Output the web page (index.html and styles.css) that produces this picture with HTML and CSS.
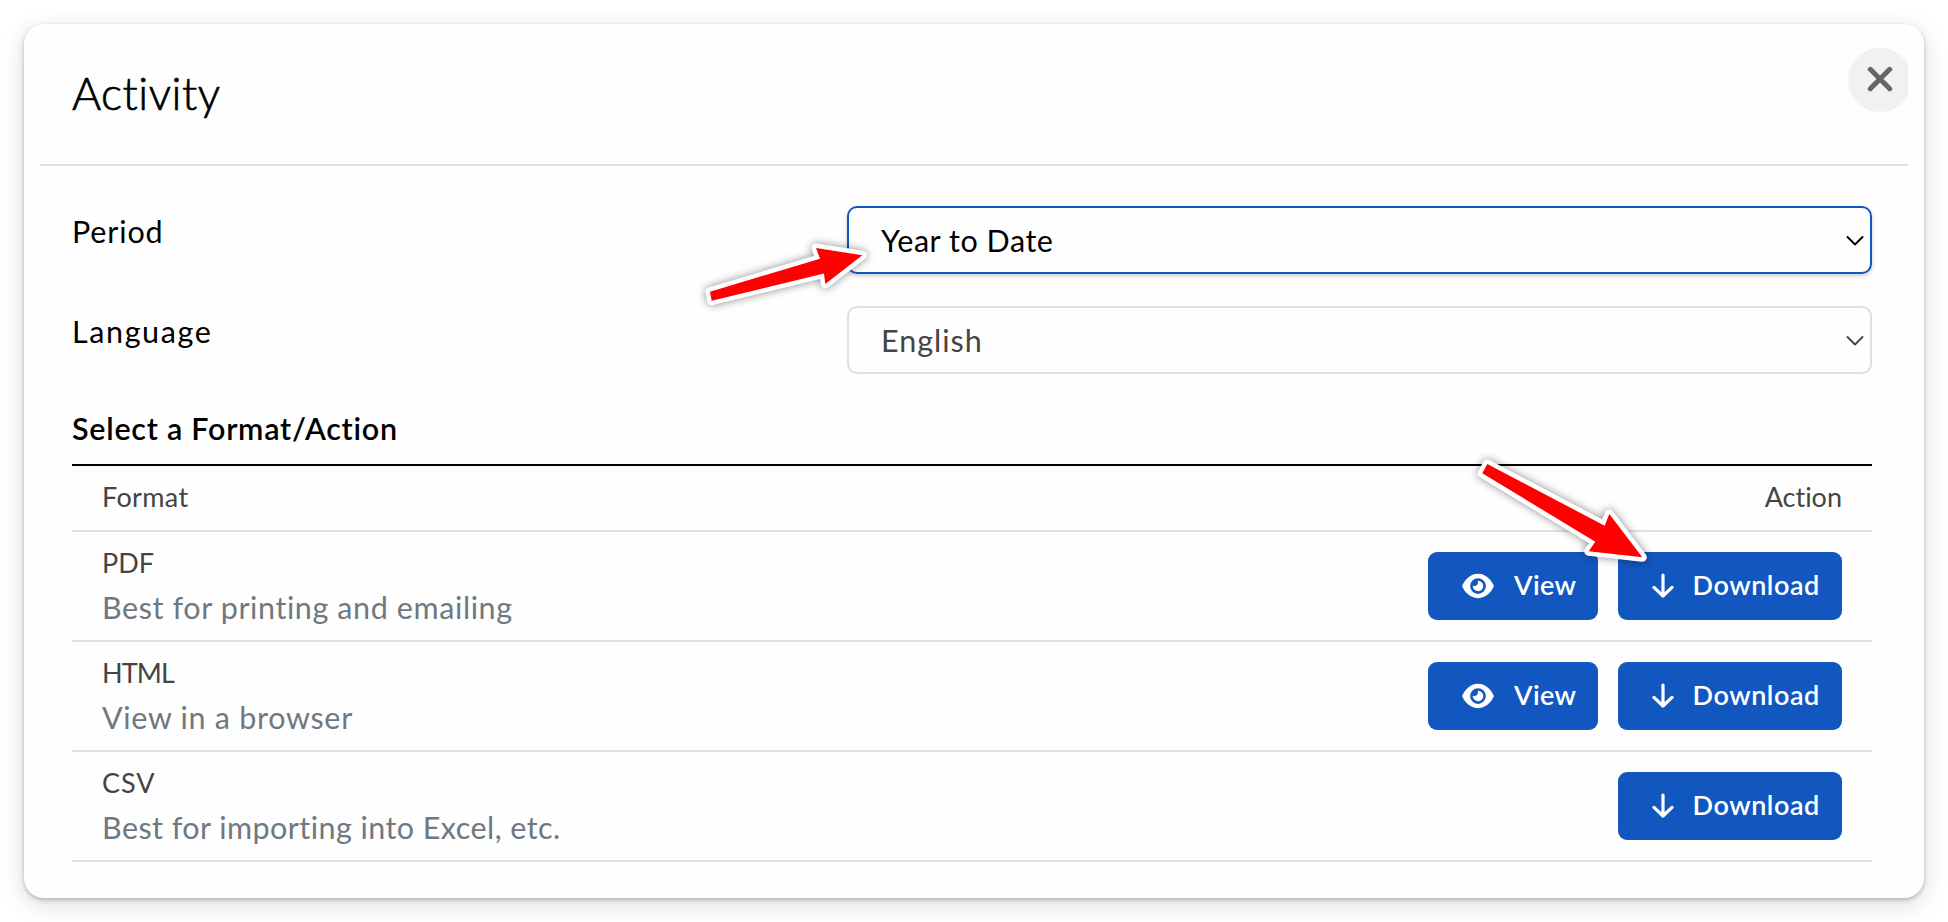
FILE: index.html
```html
<!DOCTYPE html>
<html lang="en">
<head>
<meta charset="utf-8">
<title>Activity</title>
<link rel="stylesheet" href="styles.css">
</head>
<body>
<svg class="sprite" aria-hidden="true">
  <symbol id="eye" viewBox="0 0 576 512"><path fill="currentColor" d="M288 32c-80.800 0-145.500 36.800-192.600 80.600C48.600 156 17.300 208 2.500 243.700c-3.300 7.900-3.300 16.700 0 24.600C17.300 304 48.600 356 95.400 399.400 142.500 443.200 207.200 480 288 480s145.500-36.800 192.600-80.600c46.800-43.500 78.100-95.400 93-131.100 3.300-7.900 3.300-16.700 0-24.600-14.900-35.700-46.200-87.700-93-131.100C433.500 68.800 368.800 32 288 32zM144 256a144 144 0 1 1 288 0 144 144 0 1 1-288 0zm144-64c0 35.300-28.700 64-64 64-7.100 0-13.900-1.200-20.300-3.300-5.500-1.800-11.900 1.600-11.700 7.400.3 6.900 1.300 13.800 3.200 20.700 13.700 51.200 66.400 81.600 117.600 67.900s81.600-66.400 67.900-117.600c-11.100-41.500-47.800-69.400-88.600-71.100-5.800-.2-9.200 6.100-7.400 11.700 2.100 6.400 3.300 13.200 3.300 20.300z"/></symbol>
  <symbol id="down" viewBox="0 0 22 26"><path fill="none" stroke="currentColor" stroke-width="3.200" stroke-linecap="round" stroke-linejoin="round" d="M11 2V23M2 14.400L11 23L20 14.400"/></symbol>
  <symbol id="chevron" viewBox="0 0 18 12"><path fill="none" stroke="currentColor" stroke-width="1.900" stroke-linecap="round" stroke-linejoin="round" d="M1.500 2L9 9.500L16.500 2"/></symbol>
</svg>

<main class="card">
  <header class="head">
    <h1 class="title">Activity</h1>
    <div class="close-clip">
      <button class="close" aria-label="Close"><svg viewBox="0 0 26 26"><path d="M3.300 3.300L22.700 22.700M22.700 3.300L3.300 22.700"/></svg></button>
    </div>
  </header>

  <div class="body">
    <div class="field">
      <div class="label label-period">Period</div>
      <div class="select active"><span class="value-period">Year to Date</span><svg class="chev"><use href="#chevron"/></svg></div>
    </div>
    <div class="field">
      <div class="label label-language">Language</div>
      <div class="select"><span class="value-language">English</span><svg class="chev"><use href="#chevron"/></svg></div>
    </div>

    <h2 class="section">Select a Format/Action</h2>
    <div class="thead"><span class="col-format">Format</span><span>Action</span></div>

    <div class="row">
      <div class="info"><div class="name">PDF</div><div class="desc">Best for printing and emailing</div></div>
      <button class="btn view"><svg class="eye"><use href="#eye"/></svg>View</button>
      <button class="btn download"><svg class="down"><use href="#down"/></svg>Download</button>
    </div>
    <div class="row">
      <div class="info"><div class="name name-html">HTML</div><div class="desc desc-html">View in a browser</div></div>
      <button class="btn view"><svg class="eye"><use href="#eye"/></svg>View</button>
      <button class="btn download"><svg class="down"><use href="#down"/></svg>Download</button>
    </div>
    <div class="row">
      <div class="info"><div class="name name-csv">CSV</div><div class="desc desc-csv">Best for importing into Excel, etc.</div></div>
      <button class="btn download"><svg class="down"><use href="#down"/></svg>Download</button>
    </div>
  </div>
</main>

<svg class="arrows" viewBox="0 0 1948 922" aria-hidden="true">
  <polygon points="710,291.700 711.700,300.700 824,273.500 825.300,284 862.300,255.300 816,248 820,258.700"/>
  <polygon points="1487.300,464 1482.300,473.300 1595.300,541.700 1588.700,551.300 1642.300,557.300 1609.300,514 1604.700,525.700"/>
</svg>
</body>
</html>
```
FILE: styles.css
```css
* { box-sizing: border-box; }
body {
  margin: 0;
  width: 1948px;
  height: 922px;
  padding: 24px;
  overflow: hidden;
  background: #fff;
  color: #000;
  font-family: Lato, "Open Sans", sans-serif;
  font-variant-ligatures: none;
}
.sprite { position: absolute; width: 0; height: 0; }

.card {
  height: 874px;
  padding: 0 16px;
  border-radius: 20px;
  background: #fefefe;
  box-shadow: 0 2px 4px rgba(0,0,0,.22), 0 6px 24px rgba(0,0,0,.15);
}
.head {
  height: 142px;
  display: flex;
  justify-content: space-between;
  padding: 24px 0 0 32px;
  border-bottom: 2px solid #e0e0e0;
}
.title {
  margin: 17px 0 0;
  font-size: 44.500px;
  line-height: 56px;
  font-weight: 300;
  letter-spacing: .5px;
  -webkit-text-stroke: .7px #000;
}
.close-clip { width: 60px; height: 64px; overflow: hidden; }
.close {
  width: 64px;
  height: 64px;
  border: 0;
  padding: 0 0 2px;
  border-radius: 50%;
  background: #f1f1f1;
  display: flex;
  align-items: center;
  justify-content: center;
}
.close svg { width: 26px; height: 26px; fill: none; stroke: #666; stroke-width: 5; stroke-linecap: round; }

.body { padding: 40px 36px 0 32px; }
.field { display: flex; justify-content: space-between; height: 68px; margin-bottom: 32px; }
.label { font-size: 30.500px; line-height: 50px; }
.label-period { letter-spacing: .85px; }
.label-language { letter-spacing: 1.600px; }
.select {
  width: 1025px;
  height: 68px;
  display: flex;
  align-items: center;
  justify-content: space-between;
  padding: 0 6px 0 32px;
  border: 2px solid #e0e0e0;
  border-radius: 10px;
  font-size: 30.500px;
  color: #444;
}
.select.active { border-color: #1257c0; color: #000; box-shadow: 0 2px 4px rgba(0,0,0,.2); }
.value-period { letter-spacing: .55px; }
.value-language { letter-spacing: 1px; }
.chev { width: 18px; height: 12px; margin-top: 1px; }

.section {
  margin: 0;
  height: 60px;
  padding-top: 3px;
  border-bottom: 2px solid #000;
  font-size: 30.500px;
  line-height: 38px;
  font-weight: 600;
  letter-spacing: .74px;
}
.thead {
  height: 66px;
  display: flex;
  justify-content: space-between;
  padding: 0 30px;
  border-bottom: 2px solid #e0e0e0;
  font-size: 27px;
  line-height: 62px;
  color: #444;
}
.col-format { letter-spacing: .35px; }
.row {
  height: 110px;
  display: flex;
  align-items: flex-start;
  gap: 20px;
  padding: 20px 30px 0;
  border-bottom: 2px solid #e0e0e0;
}
.info { flex: 1; margin-top: -9px; }
.name { font-size: 27px; line-height: 40px; color: #444; }
.name-html { letter-spacing: -.9px; }
.name-csv { letter-spacing: .9px; }
.desc { font-size: 30.500px; line-height: 48px; color: #6f7880; letter-spacing: .6px; }
.desc-html { letter-spacing: .7px; }
.desc-csv { letter-spacing: .44px; }
.btn {
  height: 68px;
  display: flex;
  align-items: center;
  padding: 0 0 3px 34px;
  border: 0;
  border-radius: 9px;
  background: #1257c0;
  color: #fff;
  font: 600 27px Lato, "Open Sans", sans-serif;
}
.view { width: 170px; letter-spacing: .4px; }
.download { width: 224px; letter-spacing: .55px; }
.eye { width: 32px; height: 28px; margin: 2px 20px 0 0; }
.down { width: 22px; height: 26px; margin: 2px 19px 0 -.5px; }

.arrows {
  position: absolute;
  left: 0;
  top: 0;
  width: 1948px;
  height: 922px;
  pointer-events: none;
  filter: drop-shadow(0 0 4px rgba(0,0,0,.45));
}
.arrows polygon {
  fill: #f00;
  stroke: #fff;
  stroke-width: 9;
  stroke-linejoin: round;
  paint-order: stroke;
}
```
